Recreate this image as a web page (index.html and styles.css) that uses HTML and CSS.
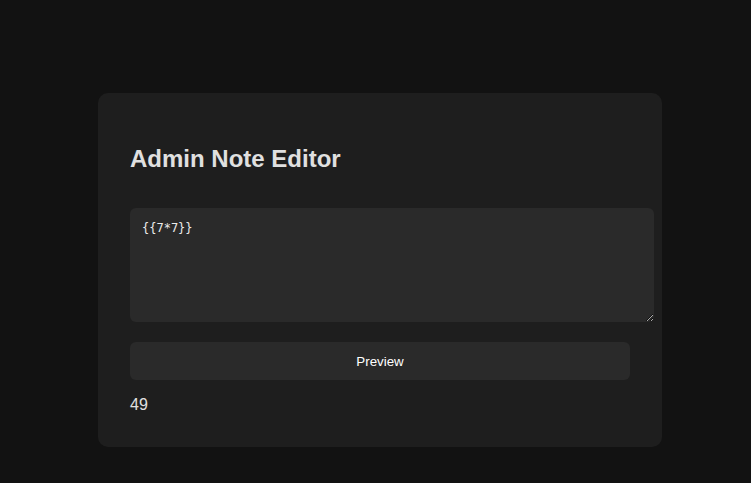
FILE: index.html
```html
<!DOCTYPE html>
<html>
<head>
<meta charset="utf-8">
<link rel="stylesheet" href="styles.css">
</head>
<body>
<div class="card">
  <h2 class="title">Admin Note Editor</h2>
  <textarea class="note">{{7*7}}</textarea>
  <button class="preview">Preview</button>
  <div class="result">49</div>
</div>
</body>
</html>
```
FILE: styles.css
```css
html, body {
  margin: 0;
  padding: 0;
  background: #121212;
  height: 100%;
}
body {
  font-family: "Liberation Sans", Arial, sans-serif;
  color: #e0e0e0;
}
.card {
  box-sizing: border-box;
  width: 564px;
  margin: 93px 0 0 98px;
  padding: 32px;
  background: #1e1e1e;
  border-radius: 10px;
}
.title {
  margin: 20px 0 0;
  font-size: 24px;
  line-height: 27px;
  font-weight: bold;
  color: #e0e0e0;
}
.note {
  display: block;
  box-sizing: border-box;
  width: 524px;
  height: 114px;
  margin: 36px 0 0;
  padding: 12px;
  border: none;
  border-radius: 6px;
  background: #2a2a2a;
  color: #ececec;
  font-family: "DejaVu Sans Mono", monospace;
  font-size: 12px;
  line-height: 17px;
  outline: none;
}
.preview {
  display: block;
  width: 500px;
  height: 38px;
  margin: 20px 0 0;
  border: none;
  border-radius: 6px;
  background: #2a2a2a;
  color: #ffffff;
  font-family: "Liberation Sans", Arial, sans-serif;
  font-size: 13.33px;
}
.result {
  margin-top: 15px;
  font-size: 16px;
  line-height: 20px;
  color: #e0e0e0;
}
```
